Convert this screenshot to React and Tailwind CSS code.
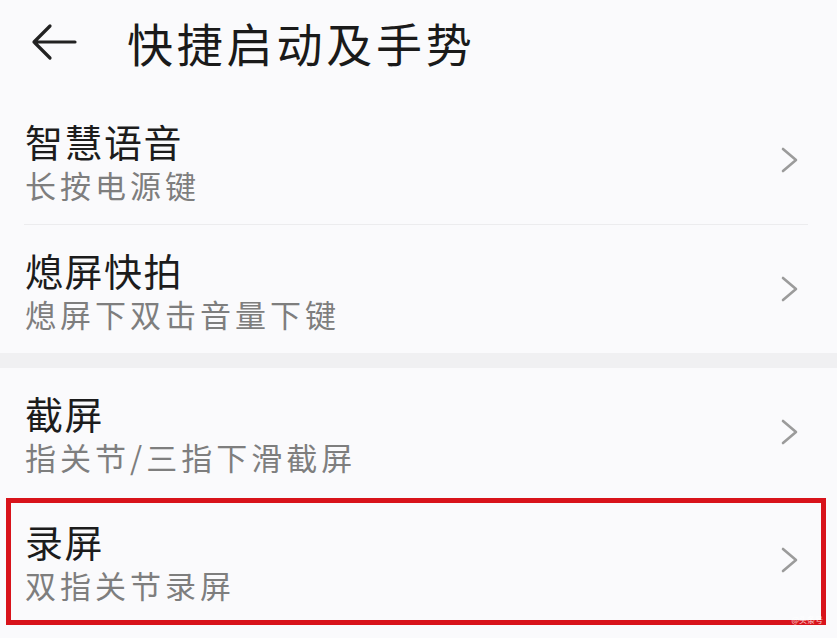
const font = { fontFamily: '"Noto Sans CJK SC", "Noto Sans", sans-serif' };

function Chevron() {
    return (
        <svg width="20" height="28" viewBox="0 0 20 28" className="shrink-0">
            <path d="M3 3 L16 14 L3 25" fill="none" stroke="#9b9b9b" strokeWidth="2.6" strokeLinecap="round" strokeLinejoin="round" />
        </svg>
    );
}

function Row({ title, sub }) {
    return (
        <div className="h-[128px] flex items-center justify-between pl-[25px] pr-[37px]">
            <div className="flex flex-col gap-[2px] pt-[4px]">
                <div className="text-[38px] leading-[44px] text-[#1c1c1c] tracking-[1.5px]">{title}</div>
                <div className="text-[31px] leading-[40px] text-[#7e7e7e] tracking-[4px]">{sub}</div>
            </div>
            <Chevron />
        </div>
    );
}

export default function App() {
    return (
        <div className="w-[837px] h-[638px] bg-[#fafafc] overflow-hidden" style={font}>
            <div className="h-[96px] flex items-center pl-[31px] pb-[12px]">
                <svg width="46" height="38" viewBox="0 0 46 38">
                    <path d="M44 19 H3 M19 3 L3 19 L19 35" fill="none" stroke="#222" strokeWidth="3.2" strokeLinecap="round" strokeLinejoin="round" />
                </svg>
                <h1 className="ml-[50px] text-[46px] leading-[54px] text-[#1a1a1a] tracking-[3.8px]">快捷启动及手势</h1>
            </div>

            <Row title="智慧语音" sub="长按电源键" />
            <div className="h-px bg-[#ececee] ml-[24px] mr-[29px]" />
            <Row title="熄屏快拍" sub="熄屏下双击音量下键" />

            <div className="h-[15px] bg-[#f0f0f2]" />

            <Row title="截屏" sub="指关节/三指下滑截屏" />
            <div className="relative">
                <Row title="录屏" sub="双指关节录屏" />
                <div className="absolute left-[6px] right-[11px] top-[2px] bottom-[-1px] border-[5px] border-[#d8131b]" />
                <span className="absolute right-[14px] bottom-[-1px] text-[8px] leading-[10px] text-white/80">@头条号</span>
            </div>
        </div>
    );
}
